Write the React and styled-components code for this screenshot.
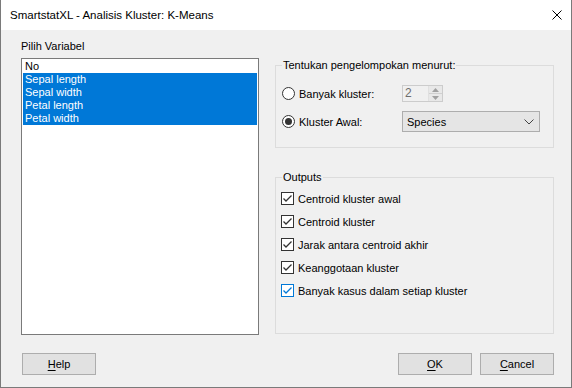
import React from 'react'
import styled, { createGlobalStyle } from "styled-components";

const GlobalStyle = createGlobalStyle`
  html, body {
    margin: 0;
    padding: 0;
    background: #f0f0f0;
  }
  * {
    box-sizing: border-box;
  }
`;

const Window = styled.div`
  width: 572px;
  height: 388px;
  display: flex;
  flex-direction: column;
  background: #f0f0f0;
  border: 1px solid #7a7a7a;
  border-top: none;
  font-family: "Liberation Sans", Arial, sans-serif;
  font-size: 11px;
  color: #000;
`;

const TitleBar = styled.div`
  height: 30px;
  flex: none;
  background: #fff;
  display: flex;
  align-items: center;
  justify-content: space-between;
  padding: 0 9px 0 9px;
  font-size: 11.5px;
`;

const CloseButton = styled.svg`
  width: 10px;
  height: 10px;
  display: block;
`;

const Body = styled.div`
  flex: 1;
  display: flex;
  flex-direction: column;
  padding: 8px 17px 0 20px;
`;

const Main = styled.div`
  display: flex;
  gap: 16px;
  height: 297px;
`;

const LeftColumn = styled.div`
  width: 238px;
  display: flex;
  flex-direction: column;
`;

const Label = styled.div`
  height: 16px;
  line-height: 16px;
  margin-bottom: 4px;
`;

const ListBox = styled.div`
  flex: 1;
  background: #fff;
  border: 1px solid #7a7a7a;
  padding: 1px;
`;

const ListItem = styled.div`
  height: 13px;
  line-height: 13px;
  padding-left: 2px;
  background: ${p => (p.$selected ? "#0078d7" : "transparent")};
  color: ${p => (p.$selected ? "#fff" : "#000")};
`;

const RightColumn = styled.div`
  width: 279px;
  display: flex;
  flex-direction: column;
`;

const Group = styled.div`
  position: relative;
  border: 1px solid #dcdcdc;
  margin-top: ${p => p.$top}px;
  height: ${p => p.$height}px;
  padding: ${p => p.$pad};
  display: flex;
  flex-direction: column;
  gap: ${p => p.$gap}px;
`;

const Legend = styled.span`
  position: absolute;
  left: 6px;
  top: -8px;
  padding: 0 1px;
  line-height: 14px;
  background: #f0f0f0;
`;

const OptionRow = styled.div`
  display: flex;
  align-items: center;
  height: 21px;
`;

const Radio = styled.span`
  width: 13px;
  height: 13px;
  border-radius: 50%;
  border: 1px solid #333;
  background: #fff;
  display: flex;
  align-items: center;
  justify-content: center;
  flex: none;
  &::after {
    content: "";
    display: ${p => (p.$checked ? "block" : "none")};
    width: 7px;
    height: 7px;
    border-radius: 50%;
    background: #333;
  }
`;

const OptionLabel = styled.span`
  width: 107px;
  padding-left: 4px;
`;

const Spinner = styled.div`
  width: 41px;
  height: 17px;
  border: 1px solid #cccccc;
  background: #f0f0f0;
  display: flex;
`;

const SpinValue = styled.span`
  flex: 1;
  color: #6d6d6d;
  line-height: 15px;
  padding-left: 2px;
  font-size: 12px;
`;

const SpinButtons = styled.div`
  width: 14px;
  display: flex;
  flex-direction: column;
  border-left: 1px solid #e0e0e0;
`;

const SpinArrow = styled.div`
  flex: 1;
  display: flex;
  align-items: center;
  justify-content: center;
  background: #e8e8e8;
  & + & {
    border-top: 1px solid #d0d0d0;
  }
`;

const Select = styled.div`
  width: 138px;
  height: 21px;
  border: 1px solid #adadad;
  background: #e5e5e5;
  display: flex;
  align-items: center;
  justify-content: space-between;
  padding: 0 5px 0 4px;
`;

const CheckRow = styled.div`
  display: flex;
  align-items: center;
  height: 17px;
`;

const CheckBox = styled.span`
  width: 13px;
  height: 13px;
  border: 1px solid ${p => (p.$focus ? "#0078d7" : "#333")};
  background: #fff;
  flex: none;
  display: flex;
  align-items: center;
  justify-content: center;
`;

const CheckLabel = styled.span`
  padding-left: 4px;
`;

const Footer = styled.div`
  display: flex;
  gap: 8px;
  margin-top: 18px;
  padding-left: 1px;
`;

const Button = styled.button`
  width: 74px;
  height: 22px;
  border: 1px solid #adadad;
  background: #e1e1e1;
  font-family: inherit;
  font-size: 11px;
  color: #000;
  padding: 0;
  margin-left: ${p => (p.$push ? "auto" : "0")};
  u {
    text-underline-offset: 2px;
  }
`;

const variables = [
  { name: "No", selected: false },
  { name: "Sepal length", selected: true },
  { name: "Sepal width", selected: true },
  { name: "Petal length", selected: true },
  { name: "Petal width", selected: true },
];

const outputs = [
  "Centroid kluster awal",
  "Centroid kluster",
  "Jarak antara centroid akhir",
  "Keanggotaan kluster",
  "Banyak kasus dalam setiap kluster",
];

function Check({ color }) {
  return (
    <svg width="11" height="11" viewBox="0 0 11 11">
      <polyline points="1.5,5.5 4,8 9.5,2.5" fill="none" stroke={color} strokeWidth="1.3" />
    </svg>
  );
}

function App() {
  return (
    <>
      <GlobalStyle />
      <Window>
        <TitleBar>
          <span>SmartstatXL - Analisis Kluster: K-Means</span>
          <CloseButton viewBox="0 0 10 10">
            <path d="M0.5 0.5 L9.5 9.5 M9.5 0.5 L0.5 9.5" stroke="#000" strokeWidth="1" />
          </CloseButton>
        </TitleBar>
        <Body>
          <Main>
            <LeftColumn>
              <Label>Pilih Variabel</Label>
              <ListBox>
                {variables.map(v => (
                  <ListItem key={v.name} $selected={v.selected}>{v.name}</ListItem>
                ))}
              </ListBox>
            </LeftColumn>
            <RightColumn>
              <Group $top={27} $height={83} $pad="17px 0 0 6px" $gap={7}>
                <Legend>Tentukan pengelompokan menurut:</Legend>
                <OptionRow>
                  <Radio />
                  <OptionLabel>Banyak kluster:</OptionLabel>
                  <Spinner>
                    <SpinValue>2</SpinValue>
                    <SpinButtons>
                      <SpinArrow>
                        <svg width="7" height="4" viewBox="0 0 7 4"><path d="M0 4 L3.5 0 L7 4 Z" fill="#a0a0a0" /></svg>
                      </SpinArrow>
                      <SpinArrow>
                        <svg width="7" height="4" viewBox="0 0 7 4"><path d="M0 0 L3.5 4 L7 0 Z" fill="#a0a0a0" /></svg>
                      </SpinArrow>
                    </SpinButtons>
                  </Spinner>
                </OptionRow>
                <OptionRow>
                  <Radio $checked />
                  <OptionLabel>Kluster Awal:</OptionLabel>
                  <Select>
                    <span>Species</span>
                    <svg width="10" height="6" viewBox="0 0 10 6">
                      <polyline points="0.5,0.5 5,5 9.5,0.5" fill="none" stroke="#444" strokeWidth="1" />
                    </svg>
                  </Select>
                </OptionRow>
              </Group>
              <Group $top={29} $height={157} $pad="12px 0 0 5px" $gap={6}>
                <Legend>Outputs</Legend>
                {outputs.map((o, i) => {
                  const focus = i === outputs.length - 1;
                  return (
                    <CheckRow key={o}>
                      <CheckBox $focus={focus}>
                        <Check color={focus ? "#0078d7" : "#333"} />
                      </CheckBox>
                      <CheckLabel>{o}</CheckLabel>
                    </CheckRow>
                  );
                })}
              </Group>
            </RightColumn>
          </Main>
          <Footer>
            <Button><u>H</u>elp</Button>
            <Button $push><u>O</u>K</Button>
            <Button><u>C</u>ancel</Button>
          </Footer>
        </Body>
      </Window>
    </>
  );
}

export default App;
